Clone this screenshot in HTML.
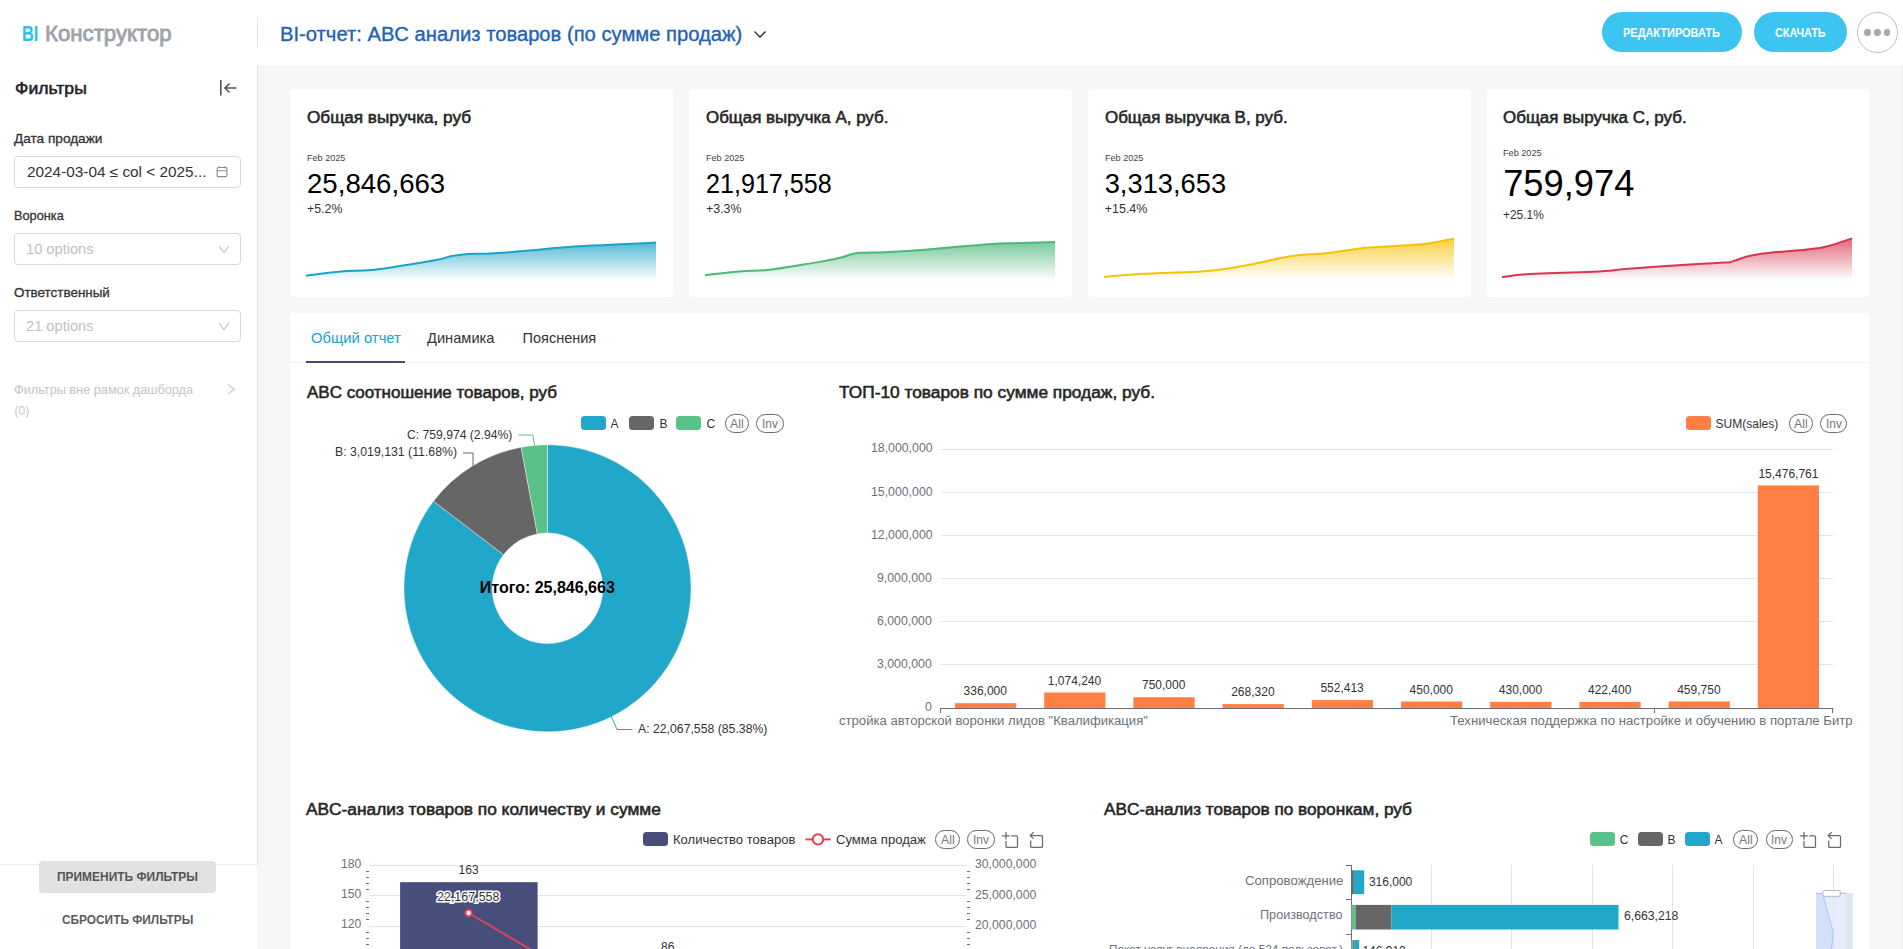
<!DOCTYPE html>
<html><head><meta charset="utf-8"><title>BI</title>
<style>
html,body{margin:0;padding:0;width:1903px;height:949px;overflow:hidden;background:#f5f5f5}
body{position:relative;font-family:"Liberation Sans",sans-serif}
.t{position:absolute;white-space:nowrap;line-height:1;transform-origin:0 0}
svg{overflow:visible}
</style></head><body>
<div style="position:absolute;left:0px;top:0px;width:1903px;height:949px;background:#f6f6f6"></div>
<div style="position:absolute;left:0px;top:0px;width:1903px;height:65px;background:#fff"></div>
<div style="position:absolute;left:0px;top:65px;width:257px;height:884px;background:#fff"></div>
<div style="position:absolute;left:257px;top:65px;width:1px;height:800px;background:#e2e2e2"></div>
<div style="position:absolute;left:0px;top:864px;width:257px;height:1px;background:#ececec"></div>
<div style="position:absolute;left:1901px;top:65px;width:2px;height:884px;background:#f0f0f0"></div>
<div class="t" style="left:21.60px;top:24.20px;font-size:21.5px;color:#2fbff0;font-weight:bold;transform:scaleX(0.7636);">BI</div>
<div class="t" style="left:44.90px;top:22.98px;font-size:22px;color:#9ea3aa;-webkit-text-stroke:0.85px #9ea3aa;transform:scaleX(1.0096);">Конструктор</div>
<div style="position:absolute;left:257px;top:18px;width:1px;height:29px;background:#e3e3e3"></div>
<div class="t" style="left:279.70px;top:24.79px;font-size:19.5px;color:#1e63b5;-webkit-text-stroke:0.35px #1e63b5;transform:scaleX(1.0359);">BI-отчет: ABC анализ товаров (по сумме продаж)</div>
<svg style="position:absolute;left:752px;top:28px" width="16" height="12"><path d="M2.5 3.5 L8 9 L13.5 3.5" fill="none" stroke="#3c4257" stroke-width="1.6"/></svg>
<div style="position:absolute;left:1602px;top:12px;width:140px;height:40px;background:#3dc5f2;border-radius:20px"></div>
<div class="t" style="left:1623.40px;top:26.72px;font-size:12.5px;color:#fff;font-weight:bold;transform:scaleX(0.8775);">РЕДАКТИРОВАТЬ</div>
<div style="position:absolute;left:1754px;top:12px;width:93px;height:40px;background:#3dc5f2;border-radius:20px"></div>
<div class="t" style="left:1774.90px;top:26.72px;font-size:12.5px;color:#fff;font-weight:bold;transform:scaleX(0.8644);">СКАЧАТЬ</div>
<div style="position:absolute;left:1857px;top:12px;width:39px;height:39px;border:1px solid #b9bec6;border-radius:50%;box-sizing:border-box;width:41px;height:41px"></div>
<div style="position:absolute;left:1864.3px;top:29.0px;width:6.6px;height:6.6px;border-radius:50%;background:#a4a9b2"></div>
<div style="position:absolute;left:1874.1px;top:29.0px;width:6.6px;height:6.6px;border-radius:50%;background:#a4a9b2"></div>
<div style="position:absolute;left:1883.9px;top:29.0px;width:6.6px;height:6.6px;border-radius:50%;background:#a4a9b2"></div>
<div class="t" style="left:14.50px;top:81.06px;font-size:16px;color:#262626;-webkit-text-stroke:0.55px #262626;transform:scaleX(1.1000);">Фильтры</div>
<svg style="position:absolute;left:218px;top:78px" width="22" height="20"><path d="M2.8 2 V17.5" stroke="#555" stroke-width="1.6"/><path d="M18.5 10 H7 M11.5 5.5 L7 10 L11.5 14.5" fill="none" stroke="#555" stroke-width="1.6"/></svg>
<div class="t" style="left:14.30px;top:132.20px;font-size:13px;color:#333;-webkit-text-stroke:0.3px #333;transform:scaleX(1.0476);">Дата продажи</div>
<div style="position:absolute;left:14px;top:156px;width:227px;height:32px;border:1px solid #d9d9d9;border-radius:4px;background:#fff;box-sizing:border-box"></div>
<div class="t" style="left:27.30px;top:164.85px;font-size:14px;color:#333;transform:scaleX(1.0957);">2024-03-04 ≤ col &lt; 2025...</div>
<svg style="position:absolute;left:215px;top:165px" width="14" height="14"><rect x="2.2" y="2.5" width="9.7" height="9.1" rx="1" fill="none" stroke="#8c8c8c" stroke-width="1.1"/><path d="M2.2 5.7 H11.9 M4.5 1.3 V3.3 M9.5 1.3 V3.3" stroke="#8c8c8c" stroke-width="1.1"/></svg>
<div class="t" style="left:14.40px;top:208.90px;font-size:13px;color:#333;-webkit-text-stroke:0.3px #333;transform:scaleX(0.9808);">Воронка</div>
<div style="position:absolute;left:14px;top:233px;width:227px;height:32px;border:1px solid #d9d9d9;border-radius:4px;background:#fff;box-sizing:border-box"></div>
<div class="t" style="left:26.20px;top:242.35px;font-size:14px;color:#bfbfbf;transform:scaleX(1.0462);">10 options</div>
<svg style="position:absolute;left:217px;top:243px" width="14" height="12"><path d="M2 3.1 L7 9.7 L11.8 3.1" fill="none" stroke="#c4c4c4" stroke-width="1.1"/></svg>
<div class="t" style="left:14.40px;top:286.40px;font-size:13px;color:#333;-webkit-text-stroke:0.3px #333;transform:scaleX(1.0323);">Ответственный</div>
<div style="position:absolute;left:14px;top:310px;width:227px;height:32px;border:1px solid #d9d9d9;border-radius:4px;background:#fff;box-sizing:border-box"></div>
<div class="t" style="left:26.20px;top:319.35px;font-size:14px;color:#bfbfbf;transform:scaleX(1.0462);">21 options</div>
<svg style="position:absolute;left:217px;top:320px" width="14" height="12"><path d="M2 3.1 L7 9.7 L11.8 3.1" fill="none" stroke="#c4c4c4" stroke-width="1.1"/></svg>
<div class="t" style="left:14.40px;top:383.94px;font-size:12px;color:#c4c4c4;transform:scaleX(1.0592);">Фильтры вне рамок дашборда</div>
<div class="t" style="left:14.60px;top:404.84px;font-size:12px;color:#c4c4c4;">(0)</div>
<svg style="position:absolute;left:225px;top:382px" width="12" height="14"><path d="M3 2.5 L9.3 7.3 L3 12.1" fill="none" stroke="#c6c6c6" stroke-width="1.1"/></svg>
<div style="position:absolute;left:39px;top:861px;width:177px;height:32px;background:#e1e1e1;border-radius:4px"></div>
<div class="t" style="left:57.00px;top:870.94px;font-size:12px;color:#555;font-weight:bold;transform:scaleX(0.9944);">ПРИМЕНИТЬ ФИЛЬТРЫ</div>
<div class="t" style="left:61.80px;top:913.64px;font-size:12px;color:#5a5a5a;font-weight:bold;transform:scaleX(0.9880);">СБРОСИТЬ ФИЛЬТРЫ</div>
<div style="position:absolute;left:290px;top:89px;width:382.5px;height:208px;background:#fff;border-radius:4px"></div>
<div class="t" style="left:306.70px;top:109.96px;font-size:16px;color:#262626;-webkit-text-stroke:0.55px #262626;transform:scaleX(1.0719);">Общая выручка, руб</div>
<div class="t" style="left:306.70px;top:152.66px;font-size:9.5px;color:#444;transform:scaleX(0.9561);">Feb 2025</div>
<div class="t" style="left:306.70px;top:170.19px;font-size:27.3px;color:#000;transform:scaleX(1.0117);">25,846,663</div>
<div class="t" style="left:306.70px;top:202.72px;font-size:12.5px;color:#333;transform:scaleX(0.9892);">+5.2%</div>
<svg style="position:absolute;left:304.8px;top:236px" width="352" height="46" viewBox="-1 -2 352 46"><defs><linearGradient id="g0" x1="0" y1="0" x2="0" y2="1"><stop offset="0" stop-color="#1ba3c6" stop-opacity="0.75"/><stop offset="1" stop-color="#1ba3c6" stop-opacity="0"/></linearGradient></defs><path d="M0.0,37.7 C8.2,36.7 16.5,35.2 33.0,33.8 C49.5,32.3 50.0,33.4 66.0,31.9 C82.0,30.4 81.0,30.1 97.0,27.6 C113.0,25.2 116.0,24.8 130.0,22.1 C144.0,19.4 138.5,18.6 153.0,16.9 C167.5,15.2 170.5,16.4 188.0,15.3 C205.5,14.2 206.0,13.9 223.0,12.4 C240.0,10.9 240.2,10.7 256.0,9.5 C271.8,8.3 269.8,8.5 286.0,7.6 C302.2,6.7 305.0,6.8 321.0,6.0 C337.0,5.2 342.8,4.9 350.0,4.6 L350,42 L0,42 Z" fill="url(#g0)"/><path d="M0.0,37.7 C8.2,36.7 16.5,35.2 33.0,33.8 C49.5,32.3 50.0,33.4 66.0,31.9 C82.0,30.4 81.0,30.1 97.0,27.6 C113.0,25.2 116.0,24.8 130.0,22.1 C144.0,19.4 138.5,18.6 153.0,16.9 C167.5,15.2 170.5,16.4 188.0,15.3 C205.5,14.2 206.0,13.9 223.0,12.4 C240.0,10.9 240.2,10.7 256.0,9.5 C271.8,8.3 269.8,8.5 286.0,7.6 C302.2,6.7 305.0,6.8 321.0,6.0 C337.0,5.2 342.8,4.9 350.0,4.6" fill="none" stroke="#1ba3c6" stroke-width="2"/></svg>
<div style="position:absolute;left:689px;top:89px;width:382.5px;height:208px;background:#fff;border-radius:4px"></div>
<div class="t" style="left:705.70px;top:109.96px;font-size:16px;color:#262626;-webkit-text-stroke:0.55px #262626;transform:scaleX(1.0566);">Общая выручка A, руб.</div>
<div class="t" style="left:705.70px;top:152.66px;font-size:9.5px;color:#444;transform:scaleX(0.9561);">Feb 2025</div>
<div class="t" style="left:705.70px;top:170.19px;font-size:27.3px;color:#000;transform:scaleX(0.9204);">21,917,558</div>
<div class="t" style="left:705.70px;top:202.72px;font-size:12.5px;color:#333;transform:scaleX(0.9919);">+3.3%</div>
<svg style="position:absolute;left:703.8px;top:236px" width="352" height="46" viewBox="-1 -2 352 46"><defs><linearGradient id="g1" x1="0" y1="0" x2="0" y2="1"><stop offset="0" stop-color="#4cb87a" stop-opacity="0.75"/><stop offset="1" stop-color="#4cb87a" stop-opacity="0"/></linearGradient></defs><path d="M0.0,37.3 C8.5,36.3 18.2,34.8 34.0,33.4 C49.8,32.0 47.0,33.6 63.0,31.9 C79.0,30.2 81.0,29.4 98.0,26.6 C115.0,23.8 118.3,23.5 131.0,20.8 C143.7,18.1 141.3,17.2 148.6,15.7 C155.8,14.2 149.9,15.2 160.0,14.7 C170.1,14.2 172.0,14.8 189.0,13.8 C206.0,12.9 208.5,12.5 228.0,10.9 C247.5,9.3 252.2,8.8 267.0,7.6 C281.8,6.4 274.8,6.7 287.0,6.0 C299.2,5.3 300.2,5.5 316.0,5.0 C331.8,4.5 341.5,4.2 350.0,4.0 L350,42 L0,42 Z" fill="url(#g1)"/><path d="M0.0,37.3 C8.5,36.3 18.2,34.8 34.0,33.4 C49.8,32.0 47.0,33.6 63.0,31.9 C79.0,30.2 81.0,29.4 98.0,26.6 C115.0,23.8 118.3,23.5 131.0,20.8 C143.7,18.1 141.3,17.2 148.6,15.7 C155.8,14.2 149.9,15.2 160.0,14.7 C170.1,14.2 172.0,14.8 189.0,13.8 C206.0,12.9 208.5,12.5 228.0,10.9 C247.5,9.3 252.2,8.8 267.0,7.6 C281.8,6.4 274.8,6.7 287.0,6.0 C299.2,5.3 300.2,5.5 316.0,5.0 C331.8,4.5 341.5,4.2 350.0,4.0" fill="none" stroke="#4cb87a" stroke-width="2"/></svg>
<div style="position:absolute;left:1088px;top:89px;width:382.5px;height:208px;background:#fff;border-radius:4px"></div>
<div class="t" style="left:1104.70px;top:109.96px;font-size:16px;color:#262626;-webkit-text-stroke:0.55px #262626;transform:scaleX(1.0578);">Общая выручка B, руб.</div>
<div class="t" style="left:1104.70px;top:152.66px;font-size:9.5px;color:#444;transform:scaleX(0.9561);">Feb 2025</div>
<div class="t" style="left:1104.70px;top:170.19px;font-size:27.3px;color:#000;">3,313,653</div>
<div class="t" style="left:1104.70px;top:202.72px;font-size:12.5px;color:#333;">+15.4%</div>
<svg style="position:absolute;left:1102.8px;top:236px" width="352" height="46" viewBox="-1 -2 352 46"><defs><linearGradient id="g2" x1="0" y1="0" x2="0" y2="1"><stop offset="0" stop-color="#f6c200" stop-opacity="0.75"/><stop offset="1" stop-color="#f6c200" stop-opacity="0"/></linearGradient></defs><path d="M0.0,39.0 C8.0,38.3 15.8,37.3 32.0,36.3 C48.2,35.2 46.5,35.7 65.0,34.8 C83.5,33.9 87.5,34.5 106.0,32.8 C124.5,31.1 121.0,31.2 139.0,28.0 C157.0,24.8 163.5,22.6 178.0,19.8 C192.5,17.0 186.0,18.0 197.0,16.9 C208.0,15.8 207.4,16.9 222.0,15.3 C236.6,13.7 242.2,12.1 255.5,10.5 C268.8,8.9 260.4,9.9 275.0,8.9 C289.6,7.9 299.5,7.8 314.0,6.6 C328.5,5.4 324.0,5.5 333.0,4.0 C342.0,2.5 345.8,1.5 350.0,0.7 L350,42 L0,42 Z" fill="url(#g2)"/><path d="M0.0,39.0 C8.0,38.3 15.8,37.3 32.0,36.3 C48.2,35.2 46.5,35.7 65.0,34.8 C83.5,33.9 87.5,34.5 106.0,32.8 C124.5,31.1 121.0,31.2 139.0,28.0 C157.0,24.8 163.5,22.6 178.0,19.8 C192.5,17.0 186.0,18.0 197.0,16.9 C208.0,15.8 207.4,16.9 222.0,15.3 C236.6,13.7 242.2,12.1 255.5,10.5 C268.8,8.9 260.4,9.9 275.0,8.9 C289.6,7.9 299.5,7.8 314.0,6.6 C328.5,5.4 324.0,5.5 333.0,4.0 C342.0,2.5 345.8,1.5 350.0,0.7" fill="none" stroke="#f6c200" stroke-width="2"/></svg>
<div style="position:absolute;left:1486.5px;top:89px;width:382.5px;height:208px;background:#fff;border-radius:4px"></div>
<div class="t" style="left:1503.20px;top:109.96px;font-size:16px;color:#262626;-webkit-text-stroke:0.55px #262626;transform:scaleX(1.0586);">Общая выручка C, руб.</div>
<div class="t" style="left:1503.20px;top:147.96px;font-size:9.5px;color:#444;transform:scaleX(0.9610);">Feb 2025</div>
<div class="t" style="left:1503.20px;top:166.27px;font-size:36.3px;color:#000;">759,974</div>
<div class="t" style="left:1503.20px;top:207.90px;font-size:13px;color:#333;transform:scaleX(0.9178);">+25.1%</div>
<svg style="position:absolute;left:1501.3px;top:236px" width="352" height="46" viewBox="-1 -2 352 46"><defs><linearGradient id="g3" x1="0" y1="0" x2="0" y2="1"><stop offset="0" stop-color="#d8354f" stop-opacity="0.75"/><stop offset="1" stop-color="#d8354f" stop-opacity="0"/></linearGradient></defs><path d="M0.0,39.0 C8.2,38.2 10.2,37.0 33.0,35.7 C55.8,34.4 66.8,35.1 91.0,33.8 C115.2,32.5 105.8,32.4 130.0,30.5 C154.2,28.6 164.8,27.9 188.0,26.4 C211.2,24.9 212.2,25.3 223.0,24.5 C233.8,23.7 222.6,25.2 231.0,23.1 C239.4,21.1 238.0,19.2 256.5,16.3 C275.0,13.4 288.0,13.4 305.0,11.4 C322.0,9.4 313.4,11.2 324.6,8.5 C335.9,5.8 343.6,2.4 350.0,0.4 L350,42 L0,42 Z" fill="url(#g3)"/><path d="M0.0,39.0 C8.2,38.2 10.2,37.0 33.0,35.7 C55.8,34.4 66.8,35.1 91.0,33.8 C115.2,32.5 105.8,32.4 130.0,30.5 C154.2,28.6 164.8,27.9 188.0,26.4 C211.2,24.9 212.2,25.3 223.0,24.5 C233.8,23.7 222.6,25.2 231.0,23.1 C239.4,21.1 238.0,19.2 256.5,16.3 C275.0,13.4 288.0,13.4 305.0,11.4 C322.0,9.4 313.4,11.2 324.6,8.5 C335.9,5.8 343.6,2.4 350.0,0.4" fill="none" stroke="#d8354f" stroke-width="2"/></svg>
<div style="position:absolute;left:290px;top:313px;width:1579px;height:636px;background:#fff"></div>
<div style="position:absolute;left:290px;top:362px;width:1579px;height:1px;background:#f0f0f0"></div>
<div class="t" style="left:310.60px;top:330.83px;font-size:14.5px;color:#20a3c8;transform:scaleX(1.0227);">Общий отчет</div>
<div class="t" style="left:427.00px;top:330.83px;font-size:14.5px;color:#333;transform:scaleX(1.0103);">Динамика</div>
<div class="t" style="left:522.60px;top:330.83px;font-size:14.5px;color:#333;">Пояснения</div>
<div style="position:absolute;left:306px;top:361px;width:99px;height:2px;background:#3f4a78"></div>
<div class="t" style="left:307.00px;top:385.36px;font-size:16px;color:#262626;-webkit-text-stroke:0.55px #262626;transform:scaleX(1.0614);">ABC соотношение товаров, руб</div>
<div style="position:absolute;left:580.8px;top:416.4px;width:25px;height:14px;background:#20a7c9;border-radius:3.5px"></div>
<div class="t" style="left:610.60px;top:417.54px;font-size:12px;color:#333;">A</div>
<div style="position:absolute;left:629px;top:416.4px;width:25px;height:14px;background:#666666;border-radius:3.5px"></div>
<div class="t" style="left:659.40px;top:417.54px;font-size:12px;color:#333;">B</div>
<div style="position:absolute;left:676.4px;top:416.4px;width:25px;height:14px;background:#5ac189;border-radius:3.5px"></div>
<div class="t" style="left:706.50px;top:417.54px;font-size:12px;color:#333;">C</div>
<div style="position:absolute;left:724.7px;top:414.1px;width:24.3px;height:18.8px;border:1px solid #6a6a6a;border-radius:9.4px;box-sizing:border-box"></div>
<div class="t" style="left:730.20px;top:417.64px;font-size:12px;color:#777;transform:scaleX(1.0231);">All</div>
<div style="position:absolute;left:756.4px;top:414.1px;width:27.3px;height:18.8px;border:1px solid #6a6a6a;border-radius:9.4px;box-sizing:border-box"></div>
<div class="t" style="left:762.10px;top:417.64px;font-size:12px;color:#777;transform:scaleX(0.9938);">Inv</div>
<svg style="position:absolute;left:0;top:0" width="1903" height="949"><path d="M547.50,444.80 A143.5,143.5 0 1 1 433.45,501.21 L503.55,554.74 A55.3,55.3 0 1 0 547.50,533.00 Z" fill="#20a7c9" stroke="#fff" stroke-width="0.4"/><path d="M433.45,501.21 A143.5,143.5 0 0 1 521.14,447.24 L537.34,533.94 A55.3,55.3 0 0 0 503.55,554.74 Z" fill="#666666" stroke="#fff" stroke-width="0.4"/><path d="M521.14,447.24 A143.5,143.5 0 0 1 547.50,444.80 L547.50,533.00 A55.3,55.3 0 0 0 537.34,533.94 Z" fill="#5ac189" stroke="#fff" stroke-width="0.4"/><path d="M518.5,435 H532.8 L534.6,445" fill="none" stroke="#5ac189" stroke-width="1"/><path d="M463,453 H473 V465.8" fill="none" stroke="#666666" stroke-width="1"/><path d="M632.4,729.5 H617 L610.9,715.5" fill="none" stroke="#20a7c9" stroke-width="1"/></svg>
<div class="t" style="left:479.80px;top:580.06px;font-size:16px;color:#000;font-weight:bold;">Итого: 25,846,663</div>
<div class="t" style="left:406.70px;top:428.84px;font-size:12px;color:#333;transform:scaleX(1.0125);">C: 759,974 (2.94%)</div>
<div class="t" style="left:334.70px;top:446.34px;font-size:12px;color:#333;transform:scaleX(1.0235);">B: 3,019,131 (11.68%)</div>
<div class="t" style="left:637.70px;top:723.24px;font-size:12px;color:#333;transform:scaleX(1.0213);">A: 22,067,558 (85.38%)</div>
<div class="t" style="left:838.60px;top:385.46px;font-size:16px;color:#262626;-webkit-text-stroke:0.55px #262626;transform:scaleX(1.0815);">ТОП-10 товаров по сумме продаж, руб.</div>
<div style="position:absolute;left:1685.5px;top:416.4px;width:25px;height:14px;background:#ff7f44;border-radius:3.5px"></div>
<div class="t" style="left:1715.60px;top:417.54px;font-size:12px;color:#333;">SUM(sales)</div>
<div style="position:absolute;left:1788.8px;top:414.1px;width:24.2px;height:18.8px;border:1px solid #6a6a6a;border-radius:9.4px;box-sizing:border-box"></div>
<div class="t" style="left:1794.25px;top:417.64px;font-size:12px;color:#777;transform:scaleX(1.0231);">All</div>
<div style="position:absolute;left:1820.4px;top:414.1px;width:26.9px;height:18.8px;border:1px solid #6a6a6a;border-radius:9.4px;box-sizing:border-box"></div>
<div class="t" style="left:1825.90px;top:417.64px;font-size:12px;color:#777;transform:scaleX(0.9938);">Inv</div>
<svg style="position:absolute;left:0;top:0" width="1903" height="949"><rect x="941" y="449" width="892" height="1" fill="#e0e6f1"/><rect x="941" y="492" width="892" height="1" fill="#e0e6f1"/><rect x="941" y="535" width="892" height="1" fill="#e0e6f1"/><rect x="941" y="578" width="892" height="1" fill="#e0e6f1"/><rect x="941" y="621" width="892" height="1" fill="#e0e6f1"/><rect x="941" y="664" width="892" height="1" fill="#e0e6f1"/><rect x="941" y="708" width="892.5" height="1" fill="#6e7079"/><rect x="940" y="708" width="1" height="5" fill="#6e7079"/><rect x="1654" y="708" width="1" height="5" fill="#6e7079"/><rect x="1832" y="708" width="1" height="5" fill="#6e7079"/><rect x="955.0" y="703.2" width="61.2" height="4.8" fill="#ff7f44"/><rect x="1044.2" y="692.5" width="61.2" height="15.5" fill="#ff7f44"/><rect x="1133.4" y="697.2" width="61.2" height="10.8" fill="#ff7f44"/><rect x="1222.6" y="704.1" width="61.2" height="3.9" fill="#ff7f44"/><rect x="1311.8" y="700.1" width="61.2" height="7.9" fill="#ff7f44"/><rect x="1401.0" y="701.5" width="61.2" height="6.5" fill="#ff7f44"/><rect x="1490.2" y="701.8" width="61.2" height="6.2" fill="#ff7f44"/><rect x="1579.4" y="701.9" width="61.2" height="6.1" fill="#ff7f44"/><rect x="1668.6" y="701.4" width="61.2" height="6.6" fill="#ff7f44"/><rect x="1757.8" y="485.4" width="61.2" height="222.6" fill="#ff7f44"/></svg>
<div class="t" style="left:871.00px;top:442.44px;font-size:12px;color:#6e7079;transform:scaleX(1.0250);">18,000,000</div>
<div class="t" style="left:871.00px;top:485.59px;font-size:12px;color:#6e7079;transform:scaleX(1.0250);">15,000,000</div>
<div class="t" style="left:871.00px;top:528.74px;font-size:12px;color:#6e7079;transform:scaleX(1.0250);">12,000,000</div>
<div class="t" style="left:877.15px;top:571.89px;font-size:12px;color:#6e7079;transform:scaleX(1.0250);">9,000,000</div>
<div class="t" style="left:877.15px;top:615.04px;font-size:12px;color:#6e7079;transform:scaleX(1.0250);">6,000,000</div>
<div class="t" style="left:877.15px;top:658.19px;font-size:12px;color:#6e7079;transform:scaleX(1.0250);">3,000,000</div>
<div class="t" style="left:925.33px;top:701.34px;font-size:12px;color:#6e7079;transform:scaleX(1.0250);">0</div>
<div class="t" style="left:963.60px;top:685.41px;font-size:12px;color:#333;">336,000</div>
<div class="t" style="left:1047.80px;top:674.79px;font-size:12px;color:#333;">1,074,240</div>
<div class="t" style="left:1142.00px;top:679.45px;font-size:12px;color:#333;">750,000</div>
<div class="t" style="left:1231.20px;top:686.38px;font-size:12px;color:#333;">268,320</div>
<div class="t" style="left:1320.40px;top:682.30px;font-size:12px;color:#333;">552,413</div>
<div class="t" style="left:1409.60px;top:683.77px;font-size:12px;color:#333;">450,000</div>
<div class="t" style="left:1498.80px;top:684.06px;font-size:12px;color:#333;">430,000</div>
<div class="t" style="left:1588.00px;top:684.17px;font-size:12px;color:#333;">422,400</div>
<div class="t" style="left:1677.20px;top:683.63px;font-size:12px;color:#333;">459,750</div>
<div class="t" style="left:1758.40px;top:467.63px;font-size:12px;color:#333;">15,476,761</div>
<div style="position:absolute;left:838px;top:708px;width:1015px;height:30px;overflow:hidden">
<div class="t" style="left:0.60px;top:6.64px;font-size:12px;color:#6e7079;transform:scaleX(1.0919);">стройка авторской воронки лидов "Квалификация"</div>
<div class="t" style="left:612.40px;top:6.64px;font-size:12px;color:#6e7079;transform:scaleX(1.0975);">Техническая поддержка по настройке и обучению в портале Битр</div>
</div>
<div class="t" style="left:306.00px;top:801.56px;font-size:16px;color:#262626;-webkit-text-stroke:0.55px #262626;transform:scaleX(1.0812);">ABC-анализ товаров по количеству и сумме</div>
<div style="position:absolute;left:642.8px;top:832.4px;width:25px;height:14px;background:#474e7c;border-radius:3.5px"></div>
<div class="t" style="left:673.00px;top:833.54px;font-size:12px;color:#333;transform:scaleX(1.0884);">Количество товаров</div>
<svg style="position:absolute;left:0;top:0" width="1903" height="949"><path d="M805.4,839.4 H830.7" stroke="#e04355" stroke-width="2"/><circle cx="818" cy="839.4" r="5.2" fill="#fff" stroke="#e04355" stroke-width="2"/></svg>
<div class="t" style="left:835.70px;top:833.54px;font-size:12px;color:#333;transform:scaleX(1.0915);">Сумма продаж</div>
<div style="position:absolute;left:934.9px;top:830.1px;width:24.8px;height:18.8px;border:1px solid #6a6a6a;border-radius:9.4px;box-sizing:border-box"></div>
<div class="t" style="left:940.65px;top:833.64px;font-size:12px;color:#777;transform:scaleX(1.0231);">All</div>
<div style="position:absolute;left:967.3px;top:830.1px;width:27.3px;height:18.8px;border:1px solid #6a6a6a;border-radius:9.4px;box-sizing:border-box"></div>
<div class="t" style="left:973.00px;top:833.64px;font-size:12px;color:#777;transform:scaleX(0.9938);">Inv</div>
<svg style="position:absolute;left:0;top:0" width="1903" height="949"><path d="M1002,835.9 h7.8 M1006,832.0 v7.5 M1006,841.1 V846.4 q0,1 1,1 H1016.5 q1,0 1,-1 V836.9 q0,-1 -1,-1 H1011.2" fill="none" stroke="#6a6a6a" stroke-width="1.25"/><path d="M1033.7,832.3 L1030.2,835.6 L1033.7,838.9 M1030.2,835.6 H1041.5 q1,0 1,1 V846.4 q0,1 -1,1 H1031.7 q-1,0 -1,-1 V840.5" fill="none" stroke="#6a6a6a" stroke-width="1.25"/></svg>
<svg style="position:absolute;left:0;top:0" width="1903" height="949"><rect x="369" y="865" width="597.5" height="1" fill="#e0e6f1"/><rect x="369" y="895" width="597.5" height="1" fill="#e0e6f1"/><rect x="369" y="926" width="597.5" height="1" fill="#e0e6f1"/><rect x="369" y="956" width="597.5" height="1" fill="#e0e6f1"/><rect x="366" y="871" width="3" height="1" fill="#6e7079"/><rect x="967" y="871" width="3" height="1" fill="#6e7079"/><rect x="366" y="877" width="3" height="1" fill="#6e7079"/><rect x="967" y="877" width="3" height="1" fill="#6e7079"/><rect x="366" y="883" width="3" height="1" fill="#6e7079"/><rect x="967" y="883" width="3" height="1" fill="#6e7079"/><rect x="366" y="889" width="3" height="1" fill="#6e7079"/><rect x="967" y="889" width="3" height="1" fill="#6e7079"/><rect x="366" y="901" width="3" height="1" fill="#6e7079"/><rect x="967" y="901" width="3" height="1" fill="#6e7079"/><rect x="366" y="907" width="3" height="1" fill="#6e7079"/><rect x="967" y="907" width="3" height="1" fill="#6e7079"/><rect x="366" y="913" width="3" height="1" fill="#6e7079"/><rect x="967" y="913" width="3" height="1" fill="#6e7079"/><rect x="366" y="919" width="3" height="1" fill="#6e7079"/><rect x="967" y="919" width="3" height="1" fill="#6e7079"/><rect x="366" y="932" width="3" height="1" fill="#6e7079"/><rect x="967" y="932" width="3" height="1" fill="#6e7079"/><rect x="366" y="938" width="3" height="1" fill="#6e7079"/><rect x="967" y="938" width="3" height="1" fill="#6e7079"/><rect x="366" y="944" width="3" height="1" fill="#6e7079"/><rect x="967" y="944" width="3" height="1" fill="#6e7079"/><rect x="366" y="950" width="3" height="1" fill="#6e7079"/><rect x="967" y="950" width="3" height="1" fill="#6e7079"/><rect x="400.1" y="882.2" width="137.5" height="70" fill="#474e7c"/><path d="M468.6,913 L540,955" stroke="#e04355" stroke-width="2" fill="none"/><circle cx="468.6" cy="913" r="3.2" fill="#fff" stroke="#e04355" stroke-width="2"/></svg>
<div class="t" style="left:340.80px;top:857.54px;font-size:12px;color:#6e7079;transform:scaleX(1.0100);">180</div>
<div class="t" style="left:340.80px;top:887.94px;font-size:12px;color:#6e7079;transform:scaleX(1.0100);">150</div>
<div class="t" style="left:340.80px;top:918.34px;font-size:12px;color:#6e7079;transform:scaleX(1.0100);">120</div>
<div class="t" style="left:975.10px;top:858.24px;font-size:12px;color:#6e7079;transform:scaleX(1.0200);">30,000,000</div>
<div class="t" style="left:975.10px;top:888.64px;font-size:12px;color:#6e7079;transform:scaleX(1.0200);">25,000,000</div>
<div class="t" style="left:975.10px;top:919.04px;font-size:12px;color:#6e7079;transform:scaleX(1.0200);">20,000,000</div>
<div class="t" style="left:458.60px;top:864.44px;font-size:12px;color:#333;">163</div>
<div class="t" style="left:437.30px;top:890.84px;font-size:12px;color:#333;transform:scaleX(1.0400);-webkit-text-stroke:3px #fff;paint-order:stroke fill;">22,167,558</div>
<div class="t" style="left:661.00px;top:941.34px;font-size:12px;color:#333;">86</div>
<div class="t" style="left:1103.80px;top:801.86px;font-size:16px;color:#262626;-webkit-text-stroke:0.55px #262626;transform:scaleX(1.0728);">ABC-анализ товаров по воронкам, руб</div>
<div style="position:absolute;left:1589.5px;top:832.4px;width:25px;height:14px;background:#5ac189;border-radius:3.5px"></div>
<div class="t" style="left:1619.80px;top:833.54px;font-size:12px;color:#333;">C</div>
<div style="position:absolute;left:1638px;top:832.4px;width:25px;height:14px;background:#666666;border-radius:3.5px"></div>
<div class="t" style="left:1667.40px;top:833.54px;font-size:12px;color:#333;">B</div>
<div style="position:absolute;left:1684.7px;top:832.4px;width:25px;height:14px;background:#20a7c9;border-radius:3.5px"></div>
<div class="t" style="left:1714.50px;top:833.54px;font-size:12px;color:#333;">A</div>
<div style="position:absolute;left:1733px;top:830.1px;width:25.2px;height:18.8px;border:1px solid #6a6a6a;border-radius:9.4px;box-sizing:border-box"></div>
<div class="t" style="left:1738.95px;top:833.64px;font-size:12px;color:#777;transform:scaleX(1.0231);">All</div>
<div style="position:absolute;left:1765.6px;top:830.1px;width:27.2px;height:18.8px;border:1px solid #6a6a6a;border-radius:9.4px;box-sizing:border-box"></div>
<div class="t" style="left:1771.25px;top:833.64px;font-size:12px;color:#777;transform:scaleX(0.9938);">Inv</div>
<svg style="position:absolute;left:0;top:0" width="1903" height="949"><path d="M1800,835.9 h7.8 M1804,832.0 v7.5 M1804,841.1 V846.4 q0,1 1,1 H1814.5 q1,0 1,-1 V836.9 q0,-1 -1,-1 H1809.2" fill="none" stroke="#6a6a6a" stroke-width="1.25"/><path d="M1831.7,832.3 L1828.2,835.6 L1831.7,838.9 M1828.2,835.6 H1839.5 q1,0 1,1 V846.4 q0,1 -1,1 H1829.7 q-1,0 -1,-1 V840.5" fill="none" stroke="#6a6a6a" stroke-width="1.25"/></svg>
<svg style="position:absolute;left:0;top:0" width="1903" height="949"><rect x="1431" y="865" width="1" height="90" fill="#e0e6f1"/><rect x="1511" y="865" width="1" height="90" fill="#e0e6f1"/><rect x="1592" y="865" width="1" height="90" fill="#e0e6f1"/><rect x="1672" y="865" width="1" height="90" fill="#e0e6f1"/><rect x="1753" y="865" width="1" height="90" fill="#e0e6f1"/><rect x="1833" y="865" width="1" height="90" fill="#e0e6f1"/><rect x="1816.1" y="893.2" width="29.7" height="60" fill="#e6edfc"/><path d="M1816.1,893.2 H1823.3 L1833.4,933 L1830.5,955 H1816.1 Z" fill="#d3e0fa"/><rect x="1845.8" y="893.2" width="6.9" height="60" fill="#dfe4f2"/><rect x="1833" y="865" width="1" height="90" fill="#dde3ef"/><path d="M1823.3,896.4 L1833.4,933 L1830.5,955" stroke="#a9c1f5" stroke-width="1" fill="none"/><path d="M1816.1,893.4 H1846" stroke="#b1bfdc" stroke-width="1.1"/><rect x="1822.9" y="890.6" width="17.4" height="5.7" rx="1.5" fill="#fff" stroke="#a9b7d4" stroke-width="1"/><rect x="1351" y="865" width="1" height="90" fill="#6e7079"/><rect x="1346" y="865" width="5" height="1" fill="#6e7079"/><rect x="1346" y="899" width="5" height="1" fill="#6e7079"/><rect x="1346" y="934" width="5" height="1" fill="#6e7079"/><rect x="1351.2" y="870.3" width="2.6" height="23.8" fill="#666666"/><rect x="1353.8" y="870.3" width="10.4" height="23.8" fill="#20a7c9"/><rect x="1351.2" y="904.9" width="4.3" height="24.6" fill="#5ac189"/><rect x="1355.5" y="904.9" width="35.9" height="24.6" fill="#666666"/><rect x="1391.4" y="904.9" width="227.1" height="24.6" fill="#20a7c9"/><rect x="1351.2" y="940" width="2" height="20" fill="#5ac189"/><rect x="1353.2" y="940" width="1.5" height="20" fill="#666666"/><rect x="1354.7" y="940" width="4.5" height="20" fill="#20a7c9"/></svg>
<div class="t" style="left:1244.50px;top:875.12px;font-size:12.5px;color:#6e7079;transform:scaleX(1.0538);">Сопровождение</div>
<div class="t" style="left:1259.50px;top:909.32px;font-size:12.5px;color:#6e7079;transform:scaleX(1.0122);">Производство</div>
<div class="t" style="left:1108.50px;top:943.92px;font-size:12.5px;color:#6e7079;transform:scaleX(0.9435);">Пакет услуг внедрения (до 524 пользоват.)</div>
<div class="t" style="left:1368.90px;top:876.24px;font-size:12px;color:#333;">316,000</div>
<div class="t" style="left:1623.70px;top:910.24px;font-size:12px;color:#333;transform:scaleX(1.0185);">6,663,218</div>
<div class="t" style="left:1362.40px;top:944.84px;font-size:12px;color:#333;">146,910</div>
</body></html>
